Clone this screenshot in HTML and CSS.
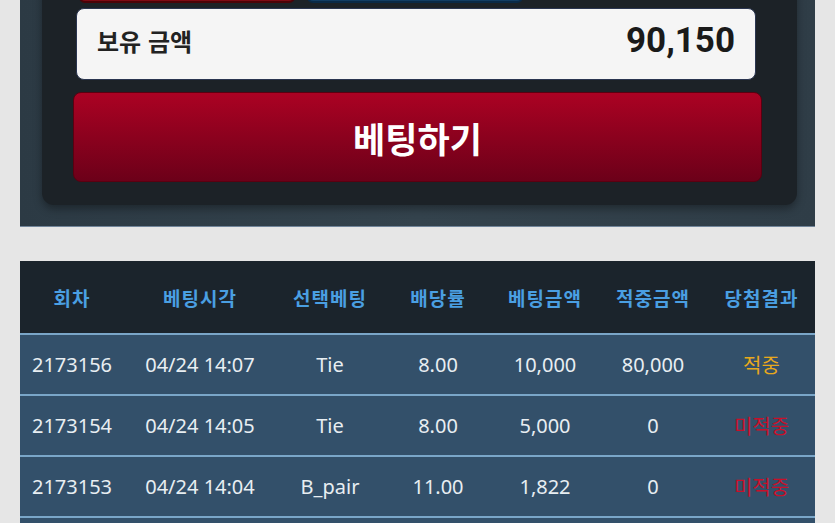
FILE: index.html
```html
<!DOCTYPE html>
<html lang="ko">
<head>
    <meta charset="UTF-8">
    <meta name="viewport" content="width=device-width, initial-scale=1.0">
    <title>베팅</title>
    <link rel="stylesheet" href="styles.css">
</head>
<body>
    <div class="page">
        <section class="bet-panel">
            <div class="bet-inner">
                <div class="pick-row">
                    <div class="pick pick-red"></div>
                    <div class="pick pick-blue"></div>
                </div>

                <div class="balance">
                    <span class="balance-label">보유 금액</span>
                    <span class="balance-value">90,150</span>
                </div>

                <button class="bet-btn">베팅하기</button>
            </div>
        </section>

        <section class="history">
            <table>
                <colgroup>
                    <col style="width:104px">
                    <col style="width:152px">
                    <col style="width:108px">
                    <col style="width:108px">
                    <col style="width:106px">
                    <col style="width:110px">
                    <col style="width:107px">
                </colgroup>
                <thead>
                    <tr>
                        <th>회차</th>
                        <th>베팅시각</th>
                        <th>선택베팅</th>
                        <th>배당률</th>
                        <th>베팅금액</th>
                        <th>적중금액</th>
                        <th>당첨결과</th>
                    </tr>
                </thead>
                <tbody>
                    <tr>
                        <td>2173156</td>
                        <td>04/24 14:07</td>
                        <td>Tie</td>
                        <td>8.00</td>
                        <td>10,000</td>
                        <td>80,000</td>
                        <td class="win">적중</td>
                    </tr>
                    <tr>
                        <td>2173154</td>
                        <td>04/24 14:05</td>
                        <td>Tie</td>
                        <td>8.00</td>
                        <td>5,000</td>
                        <td>0</td>
                        <td class="lose">미적중</td>
                    </tr>
                    <tr>
                        <td>2173153</td>
                        <td>04/24 14:04</td>
                        <td>B_pair</td>
                        <td>11.00</td>
                        <td>1,822</td>
                        <td>0</td>
                        <td class="lose">미적중</td>
                    </tr>
                    <tr>
                        <td></td><td></td><td></td><td></td><td></td><td></td><td></td>
                    </tr>
                </tbody>
            </table>
        </section>
    </div>
</body>
</html>
```

FILE: styles.css
```css
body {
    margin: 0;
    background-color: #e6e6e6;
    font-family: "Noto Sans", "Noto Sans CJK KR", sans-serif;
    overflow: hidden;
}

.page {
    padding: 0 20px;
}

/* betting panel */
.bet-panel {
    margin-top: -37px;
    background: linear-gradient(90deg, #2c3a44, #34434d 50%, #2f3d47);
    border-bottom: 1px solid #71859a;
    padding: 0 18px 21px 22px;
}

.bet-inner {
    background-color: #1c2227;
    border-radius: 0 0 12px 12px;
    box-shadow: 0 4px 8px rgba(0, 0, 0, 0.35);
    padding: 0 35px 23px 31px;
}

.pick-row {
    display: flex;
    gap: 12px;
    padding-left: 6px;
}

.pick {
    width: 216px;
    height: 40px;
    box-sizing: border-box;
    border-radius: 6px;
}

.pick-red {
    background-color: #7d0a14;
    border: 2px solid #4a0308;
}

.pick-blue {
    background-color: #123d63;
    border: 2px solid #0a2a47;
}

.balance {
    display: flex;
    justify-content: space-between;
    align-items: center;
    margin: 5px 6px 0 3px;
    height: 70px;
    padding: 0 20px;
    background-color: #f5f5f5;
    border: 1px solid #2a3550;
    border-radius: 8px;
}

.balance-label {
    font-family: "Noto Sans CJK KR", sans-serif;
    font-weight: bold;
    font-size: 24px;
    color: #222;
    margin-top: -8px;
}

.balance-value {
    font-family: Roboto, "Noto Sans", sans-serif;
    font-weight: bold;
    font-size: 35px;
    color: #1a1a1a;
    margin-top: -7px;
}

.bet-btn {
    display: block;
    width: 100%;
    height: 90px;
    margin-top: 12px;
    border: 1px solid #5a0010;
    border-radius: 8px;
    background: linear-gradient(180deg, #ab0223, #6c0019);
    color: #fff;
    font-family: "Noto Sans CJK KR", sans-serif;
    font-weight: bold;
    font-size: 35px;
    cursor: pointer;
}

/* history table */
.history {
    margin-top: 34px;
}

table {
    width: 100%;
    table-layout: fixed;
    border-collapse: collapse;
}

th {
    height: 72px;
    background-color: #1b242c;
    color: #4a9fe2;
    font-family: "Noto Sans CJK KR", sans-serif;
    font-weight: bold;
    font-size: 19px;
    letter-spacing: 1px;
    border-bottom: 2px solid #7aa6c8;
    padding: 0;
}

td {
    height: 59px;
    background-color: #33506a;
    color: #e8eef2;
    font-size: 20px;
    text-align: center;
    border-bottom: 2px solid #7aa6c8;
    padding: 0;
    white-space: nowrap;
}

td.win {
    color: #e8a91c;
    font-family: "Noto Sans CJK KR", sans-serif;
}

td.lose {
    color: #c8102a;
    font-family: "Noto Sans CJK KR", sans-serif;
}
```
